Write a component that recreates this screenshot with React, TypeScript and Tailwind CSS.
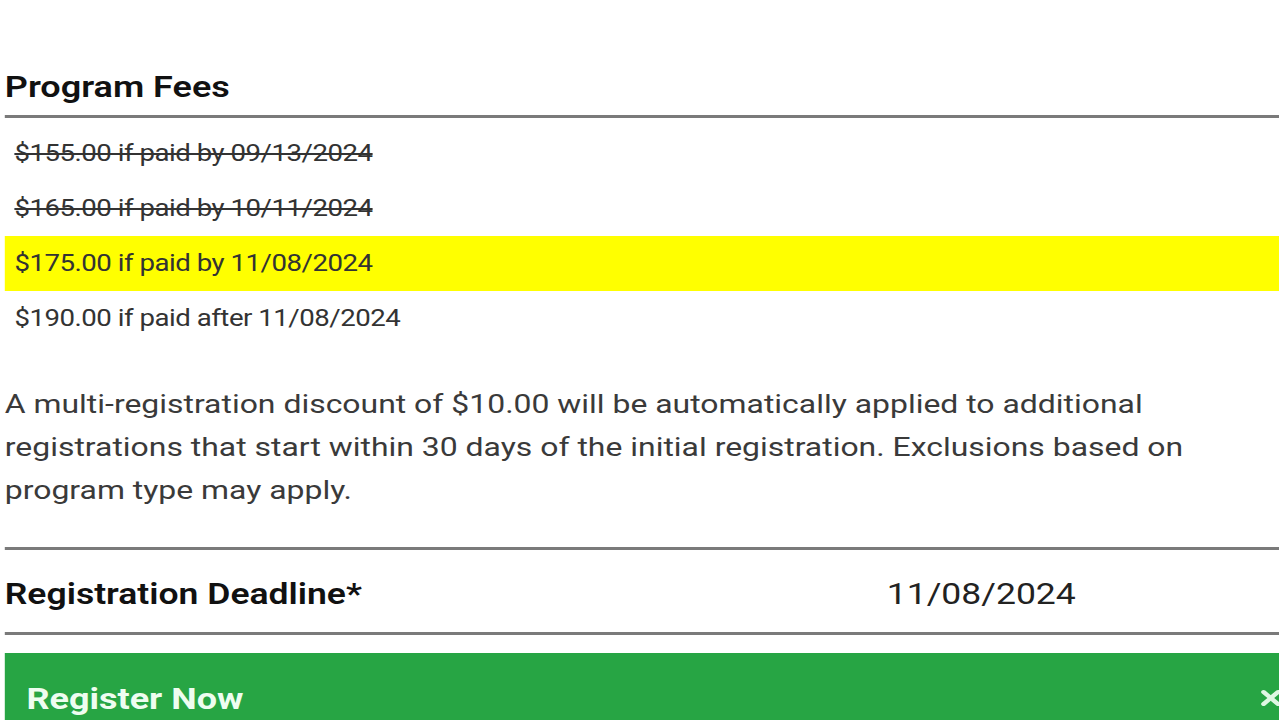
import { X } from 'lucide-react';

const fees = [
  { label: '$155.00 if paid by 09/13/2024', expired: true },
  { label: '$165.00 if paid by 10/11/2024', expired: true },
  { label: '$175.00 if paid by 11/08/2024', current: true },
  { label: '$190.00 if paid after 11/08/2024' },
];

export default function App() {
  return (
    <div className="h-[720px] w-[1279px] overflow-hidden bg-white font-['Roboto',sans-serif]">
      {/* the page is drawn stretched sideways, as in the capture */}
      <div className="w-[1090px] origin-top-left scale-x-[1.2] pl-[4px] pt-[67px]">
        {/* Program Fees */}
        <h2 className="text-[30px] leading-[40px] font-semibold text-[#111] pb-2 border-b-[3px] border-[#7a7a7a]">
          Program Fees
        </h2>

        <ul className="mt-2">
          {fees.map((fee) => (
            <li
              key={fee.label}
              className={`h-[55px] leading-[55px] px-[8px] text-[23px] tracking-[-0.4px] text-[#333] ${
                fee.expired ? 'line-through' : ''
              } ${fee.current ? 'bg-[#ffff00]' : ''}`}
            >
              {fee.label}
            </li>
          ))}
        </ul>

        <p className="mt-[36px] text-[26.6px] leading-[43px] text-[#3a3a3a]">
          A multi-registration discount of $10.00 will be automatically applied to additional
          <br />
          registrations that start within 30 days of the initial registration. Exclusions based on
          <br />
          program type may apply.
        </p>

        {/* Deadline */}
        <div className="mt-[36px] flex items-center h-[88px] pt-[7px] border-y-[3px] border-[#7a7a7a]">
          <span className="w-[735px] text-[29.6px] font-semibold text-[#111]">Registration Deadline*</span>
          <span className="text-[29.6px] text-[#222]">11/08/2024</span>
        </div>

        {/* Register button */}
        <button className="mt-[18px] flex w-full h-[100px] items-start justify-between bg-[#27a544] pl-[18px] pr-[19px] pt-[23px] text-left">
          <span className="text-[30px] font-bold text-[#eefdf0]">Register Now</span>
          <X className="mt-[8px] h-[28px] w-[24px] text-[#dff7e3]" strokeWidth={4} />
        </button>
      </div>
    </div>
  );
}
